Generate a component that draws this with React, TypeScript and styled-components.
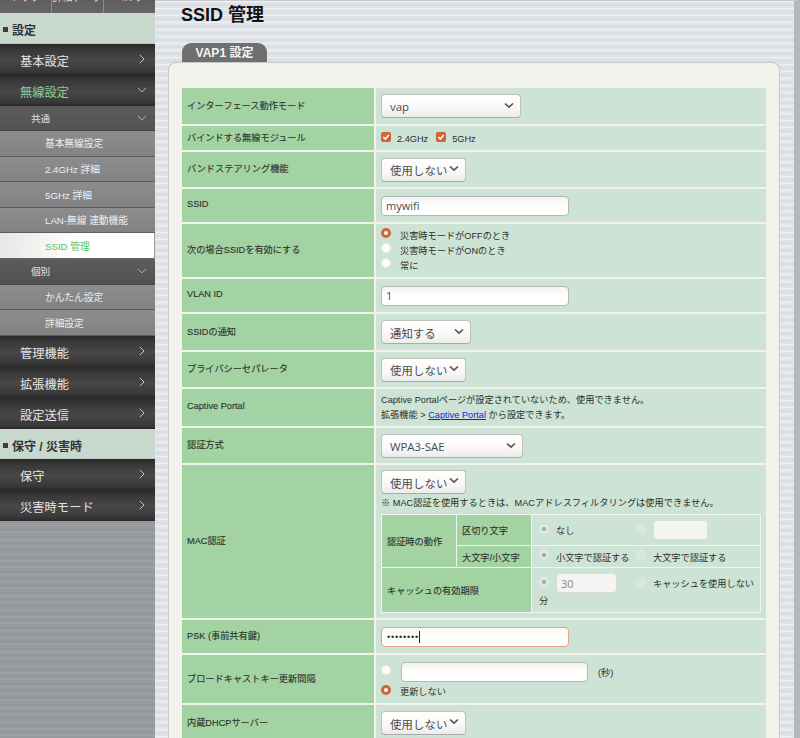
import React from "react";
import styled, { createGlobalStyle } from "styled-components";

const CJK = `"Noto Sans CJK JP"`;
const SANS = `"Liberation Sans", ${CJK}, sans-serif`;
const FIELD = `"Open Sans", ${CJK}, sans-serif`;

const Global = createGlobalStyle`
  html, body { margin: 0; padding: 0; height: 738px; overflow: hidden; background: #dfe2e6; }
  * { box-sizing: border-box; }
`;

const Page = styled.div`
  display: flex;
  width: 800px;
  height: 738px;
  overflow: hidden;
  font-family: ${SANS};
  color: #2b2f2b;
`;

const Sidebar = styled.nav`
  width: 155px;
  flex: none;
  height: 738px;
  background:
    repeating-linear-gradient(180deg, rgba(255,255,255,.07) 0 1px, transparent 1px 4px, rgba(0,0,0,.05) 4px 5px, transparent 5px 7px),
    #989ba0;
`;

const TopTabs = styled.div`
  display: flex;
  height: 13px;
  background: linear-gradient(180deg, #5f5f5f, #666);
  overflow: hidden;
`;

const TopTab = styled.div`
  flex: 1;
  height: 13px;
  border-right: 1px solid #8b8b8b;
  color: #ddd;
  font-size: 10px;
  line-height: 10px;
  text-align: center;
  overflow: hidden;
  &:last-child { border-right: 0; }
  & > span { display: block; margin-top: -7px; }
`;

const SectionHead = styled.div`
  height: 30.5px;
  padding: 3px 0 0 3px;
  background: #c8d8cd;
  display: flex;
  align-items: center;
  font-size: 12px;
  font-weight: 700;
  color: #30343a;
  gap: 2px;
  border-bottom: 1px solid #b9c9be;
`;

const Square = styled.i`
  width: 5px;
  height: 5px;
  background: #3a3a3a;
  margin-right: 2px;
`;

const MainItem = styled.div<{ $on?: boolean }>`
  height: 31px;
  display: flex;
  align-items: center;
  justify-content: space-between;
  padding: 4px 8px 0 20px;
  font-size: 12.2px;
  letter-spacing: .1px;
  color: ${(p) => (p.$on ? "#8fcf92" : "#e4e6e4")};
  background: linear-gradient(180deg, #2a2a2a 0%, #3a3a3a 22%, #474747 55%, #3a3a3a 88%, #2f2f2f 100%);
  border-bottom: 1px solid #2a2a2a;
  & > svg { margin-top: -4px; }
`;

const GroupItem = styled.div`
  height: 25.6px;
  display: flex;
  align-items: center;
  justify-content: space-between;
  padding: 0 8px 0 31px;
  font-size: 9.6px;
  color: #e4e4e4;
  background: linear-gradient(180deg, #5c5c5c, #525252);
  border-bottom: 1px solid #474747;
`;

const SubItem = styled.div<{ $on?: boolean }>`
  height: 25.6px;
  display: flex;
  align-items: center;
  padding-left: 45px;
  font-size: 9.7px;
  color: ${(p) => (p.$on ? "#55c265" : "#efefef")};
  background: ${(p) =>
    p.$on ? "linear-gradient(90deg, #e6e6e4, #fff 50%)" : "linear-gradient(180deg, #8d8d8d, #828282)"};
  border-bottom: 1px solid ${(p) => (p.$on ? "#666" : "#5d5d5d")};
  margin-right: ${(p) => (p.$on ? "1px" : "0")};
`;

const Main = styled.main`
  flex: 1;
  height: 738px;
  overflow: hidden;
  padding-left: 13px;
  border-right: 6px solid #b5b8bf;
  background:
    repeating-linear-gradient(180deg, rgba(255,255,255,.5) 0 1px, transparent 1px 3px, rgba(120,130,140,.06) 3px 5px, transparent 5px 7px),
    #e0e3e8;
  border-top: 1px solid #c9c9cb;
`;

const Title = styled.h1`
  margin: 0;
  height: 42px;
  padding: 4px 0 0 13px;
  font-size: 18px;
  line-height: 21px;
  font-weight: 700;
  color: #111;
`;

const Tab = styled.div`
  margin-left: 14px;
  width: 85px;
  height: 19px;
  border-radius: 9px 9px 0 0;
  background: #6f6f6f;
  color: #f4f4f4;
  font-size: 12px;
  font-weight: 700;
  line-height: 21px;
  text-align: center;
`;

const Panel = styled.section`
  width: 612px;
  height: 700px;
  padding: 23px 0 0 11px;
  background: #f1f2ec;
  border: 1px solid #c6c8cc;
  border-bottom: 0;
  border-radius: 8px 8px 0 0;
`;

const FormTable = styled.table`
  width: 588px;
  table-layout: fixed;
  border-collapse: separate;
  border-spacing: 2px 2px;
  font-size: 9.2px;
`;

const Label = styled.th<{ $h?: number }>`
  width: 192px;
  height: ${(p) => p.$h}px;
  background: #a3d2a3;
  padding: 0 5px 3px;
  font-weight: 400;
  text-align: left;
  color: #2a312a;
  -webkit-text-stroke: 0.1px #2a312a;
`;

const Value = styled.td<{ $lift?: number }>`
  background: #cde3d5;
  padding: 0 5px ${(p) => p.$lift ?? 0}px;
  vertical-align: middle;
`;

const SelectBox = styled.div<{ $w: number; $chevronUp?: boolean }>`
  position: relative;
  width: ${(p) => p.$w}px;
  height: 24px;
  padding-left: 8px;
  display: flex;
  align-items: center;
  font-family: ${FIELD};
  font-size: 11.4px;
  letter-spacing: ${(p) => (p.$chevronUp ? ".1px" : "0")};
  color: #4b4b4b;
  background: linear-gradient(180deg, #fff 0%, #fafafa 50%, #ececec 100%);
  border: 1px solid #c0c0bc;
  border-bottom: 1.5px solid #aaa;
  border-radius: 4px;
  & > span { margin-top: 1px; }
  & > svg {
    position: absolute;
    right: 6px;
    top: ${(p) => (p.$chevronUp ? "6px" : "7px")};
  }
`;

const Field = styled.input<{ $w?: number }>`
  display: block;
  width: ${(p) => p.$w ?? 188}px;
  height: 20px;
  padding: 0 4px;
  font-family: ${FIELD};
  font-size: 11px;
  color: #4b4b4b;
  background: linear-gradient(180deg, #f2f2f2 0%, #fff 45%);
  border: 1px solid #b7b7b2;
  border-radius: 4px;
  outline: 0;
  &:disabled { background: #f4f4f2; border-color: #dcdcd8; color: #8a8a8a; }
`;

const PasswordBox = styled.div`
  width: 188px;
  height: 20px;
  display: flex;
  align-items: center;
  padding-left: 5px;
  background: linear-gradient(180deg, #fbf7f4 0%, #fff 45%);
  border: 1px solid #e9a184;
  border-radius: 4px;
  font-size: 9px;
  letter-spacing: .85px;
  color: #333;
`;

const Caret = styled.i`
  width: 1px;
  height: 12px;
  background: #222;
`;

const OptionRow = styled.div<{ $gap?: number; $h?: number }>`
  display: flex;
  align-items: center;
  gap: ${(p) => p.$gap ?? 9}px;
  height: ${(p) => p.$h ?? 15}px;
`;

const InlineOptions = styled.div`
  display: flex;
  align-items: center;
`;

const CheckBox = styled.span`
  width: 10px;
  height: 10px;
  display: inline-flex;
  border-radius: 2px;
  background: #d2633a;
  margin-top: -3px;
`;

const CheckLabel = styled.span<{ $mr?: number }>`
  margin: 2px ${(p) => p.$mr ?? 0}px 0 6px;
`;

const Dot = styled.input.attrs({ type: "radio", readOnly: true })`
  appearance: none;
  width: 10px;
  height: 10px;
  margin: -3px 0 0 0;
  flex: none;
  border-radius: 50%;
  background: #fdfdfd;
  border: 1px solid #e4eae6;
  &:checked {
    background: #fff;
    border: 3.2px solid #d2633a;
  }
  &:disabled { background: #dbe5df; border: 1px solid #e3eae6; }
  &:disabled:checked { background: #9ba7a0; border: 3px solid #dfe8e3; }
`;

const Note = styled.p`
  margin: 0;
  line-height: 14.5px;
`;

const Anchor = styled.a`
  color: #1a1ae8;
  text-decoration: underline;
`;

const Warning = styled.div`
  margin: 3px 0 4px;
  line-height: 13px;
  letter-spacing: .02px;
`;

const InnerTable = styled.table`
  width: 380px;
  table-layout: fixed;
  border-collapse: separate;
  border-spacing: 1px;
  background: #eef4ee;
  font-size: 9.2px;
`;

const InnerLabel = styled.th<{ $w?: number; $h?: number }>`
  ${(p) => (p.$w ? `width: ${p.$w}px;` : "")}
  ${(p) => (p.$h ? `height: ${p.$h}px;` : "")}
  background: #a3d2a3;
  font-weight: 400;
  text-align: left;
  padding: 0 5px;
  color: #2a312a;
  -webkit-text-stroke: 0.1px #2a312a;
`;

const InnerValue = styled.td`
  background: #cde3d5;
  padding: 0 0 0 7px;
`;

const Col = styled.span<{ $w: number }>`
  display: inline-flex;
  align-items: center;
  gap: 7px;
  width: ${(p) => p.$w}px;
  flex: none;
  white-space: nowrap;
`;

const Chevron = ({ down, thick }: { down?: boolean; thick?: boolean }) =>
  thick ? (
    <svg width="10" height="7" viewBox="0 0 10 7" fill="none">
      <path d="M1 1.5 5 5.2 9 1.5" stroke="#555" strokeWidth="1.7" />
    </svg>
  ) : down ? (
    <svg width="10" height="6" viewBox="0 0 10 6" fill="none">
      <path d="M.7 .8 5 4.8 9.3 .8" stroke="#aeaeae" strokeWidth="1" />
    </svg>
  ) : (
    <svg width="8" height="10" viewBox="0 0 8 10" fill="none">
      <path d="M.8 .8 5 5 .8 9.2" stroke="#c4c4c4" strokeWidth="1" />
    </svg>
  );

const Tick = () => (
  <svg width="10" height="10" viewBox="0 0 10 10" fill="none">
    <path d="M2.3 5 4.3 7.1 7.8 2.9" stroke="#fff" strokeWidth="1.5" />
  </svg>
);

const Select = ({ w, children, up }: { w: number; children: string; up?: boolean }) => (
  <SelectBox $w={w} $chevronUp={up}>
    <span>{children}</span>
    <Chevron thick />
  </SelectBox>
);

const Radio = ({ on, off }: { on?: boolean; off?: boolean }) => (
  <Dot checked={!!on} disabled={!!off} />
);

export default function App() {
  return (
    <Page>
      <Global />
      <Sidebar>
        <TopTabs>
          <TopTab><span>トップ</span></TopTab>
          <TopTab><span>詳細データ</span></TopTab>
          <TopTab><span>ヘルプ</span></TopTab>
        </TopTabs>
        <SectionHead><Square />設定</SectionHead>
        <MainItem>基本設定<Chevron /></MainItem>
        <MainItem $on>無線設定<Chevron down /></MainItem>
        <GroupItem>共通<Chevron down /></GroupItem>
        <SubItem>基本無線設定</SubItem>
        <SubItem>2.4GHz 詳細</SubItem>
        <SubItem>5GHz 詳細</SubItem>
        <SubItem>LAN-無線 連動機能</SubItem>
        <SubItem $on>SSID 管理</SubItem>
        <GroupItem>個別<Chevron down /></GroupItem>
        <SubItem>かんたん設定</SubItem>
        <SubItem>詳細設定</SubItem>
        <MainItem>管理機能<Chevron /></MainItem>
        <MainItem>拡張機能<Chevron /></MainItem>
        <MainItem>設定送信<Chevron /></MainItem>
        <SectionHead><Square />保守 / 災害時</SectionHead>
        <MainItem>保守<Chevron /></MainItem>
        <MainItem>災害時モード<Chevron /></MainItem>
      </Sidebar>
      <Main>
        <Title>SSID 管理</Title>
        <Tab>VAP1 設定</Tab>
        <Panel>
          <FormTable>
            <tbody>
              <tr>
                <Label $h={36}>インターフェース動作モード</Label>
                <Value><Select w={140}>vap</Select></Value>
              </tr>
              <tr>
                <Label $h={24}>バインドする無線モジュール</Label>
                <Value>
                  <InlineOptions>
                    <CheckBox><Tick /></CheckBox>
                    <CheckLabel $mr={8}>2.4GHz</CheckLabel>
                    <CheckBox><Tick /></CheckBox>
                    <CheckLabel>5GHz</CheckLabel>
                  </InlineOptions>
                </Value>
              </tr>
              <tr>
                <Label $h={35}>バンドステアリング機能</Label>
                <Value><Select w={85} up>使用しない</Select></Value>
              </tr>
              <tr>
                <Label $h={33}>SSID</Label>
                <Value><Field readOnly value="mywifi" /></Value>
              </tr>
              <tr>
                <Label $h={53}>次の場合SSIDを有効にする</Label>
                <Value $lift={2}>
                  <OptionRow><Radio on />災害時モードがOFFのとき</OptionRow>
                  <OptionRow><Radio />災害時モードがONのとき</OptionRow>
                  <OptionRow><Radio />常に</OptionRow>
                </Value>
              </tr>
              <tr>
                <Label $h={33}>VLAN ID</Label>
                <Value><Field readOnly value="1" /></Value>
              </tr>
              <tr>
                <Label $h={36}>SSIDの通知</Label>
                <Value><Select w={90}>通知する</Select></Value>
              </tr>
              <tr>
                <Label $h={35}>プライバシーセパレータ</Label>
                <Value><Select w={85} up>使用しない</Select></Value>
              </tr>
              <tr>
                <Label $h={37}>Captive Portal</Label>
                <Value>
                  <Note>Captive Portalページが設定されていないため、使用できません。</Note>
                  <Note>拡張機能 &gt; <Anchor href="#">Captive Portal</Anchor> から設定できます。</Note>
                </Value>
              </tr>
              <tr>
                <Label $h={35}>認証方式</Label>
                <Value><Select w={142}>WPA3-SAE</Select></Value>
              </tr>
              <tr>
                <Label $h={153}>MAC認証</Label>
                <Value>
                  <Select w={85} up>使用しない</Select>
                  <Warning>※ MAC認証を使用するときは、MACアドレスフィルタリングは使用できません。</Warning>
                  <InnerTable>
                    <tbody>
                      <tr>
                        <InnerLabel $w={74} rowSpan={2}>認証時の動作</InnerLabel>
                        <InnerLabel $w={74} $h={30}>区切り文字</InnerLabel>
                        <InnerValue>
                          <InlineOptions>
                            <Col $w={97}><Radio on off />なし</Col>
                            <Col $w={118}><Radio off /><Field disabled $w={55} /></Col>
                          </InlineOptions>
                        </InnerValue>
                      </tr>
                      <tr>
                        <InnerLabel $h={21}>大文字/小文字</InnerLabel>
                        <InnerValue>
                          <InlineOptions>
                            <Col $w={97}><Radio on off />小文字で認証する</Col>
                            <Col $w={118}><Radio off />大文字で認証する</Col>
                          </InlineOptions>
                        </InnerValue>
                      </tr>
                      <tr>
                        <InnerLabel colSpan={2} $h={44}>キャッシュの有効期限</InnerLabel>
                        <InnerValue>
                          <InlineOptions>
                            <Col $w={97}><Radio on off /><Field disabled $w={61} value="30" readOnly /></Col>
                            <Col $w={118}><Radio off />キャッシュを使用しない</Col>
                          </InlineOptions>
                          分
                        </InnerValue>
                      </tr>
                    </tbody>
                  </InnerTable>
                </Value>
              </tr>
              <tr>
                <Label $h={33}>PSK (事前共有鍵)</Label>
                <Value><PasswordBox>••••••••<Caret /></PasswordBox></Value>
              </tr>
              <tr>
                <Label $h={48}>ブロードキャストキー更新間隔</Label>
                <Value>
                  <OptionRow $gap={10} $h={24}>
                    <Radio /><Field readOnly $w={187} value="" /><span>(秒)</span>
                  </OptionRow>
                  <OptionRow><Radio on />更新しない</OptionRow>
                </Value>
              </tr>
              <tr>
                <Label $h={36}>内蔵DHCPサーバー</Label>
                <Value><Select w={85} up>使用しない</Select></Value>
              </tr>
            </tbody>
          </FormTable>
        </Panel>
      </Main>
    </Page>
  );
}
